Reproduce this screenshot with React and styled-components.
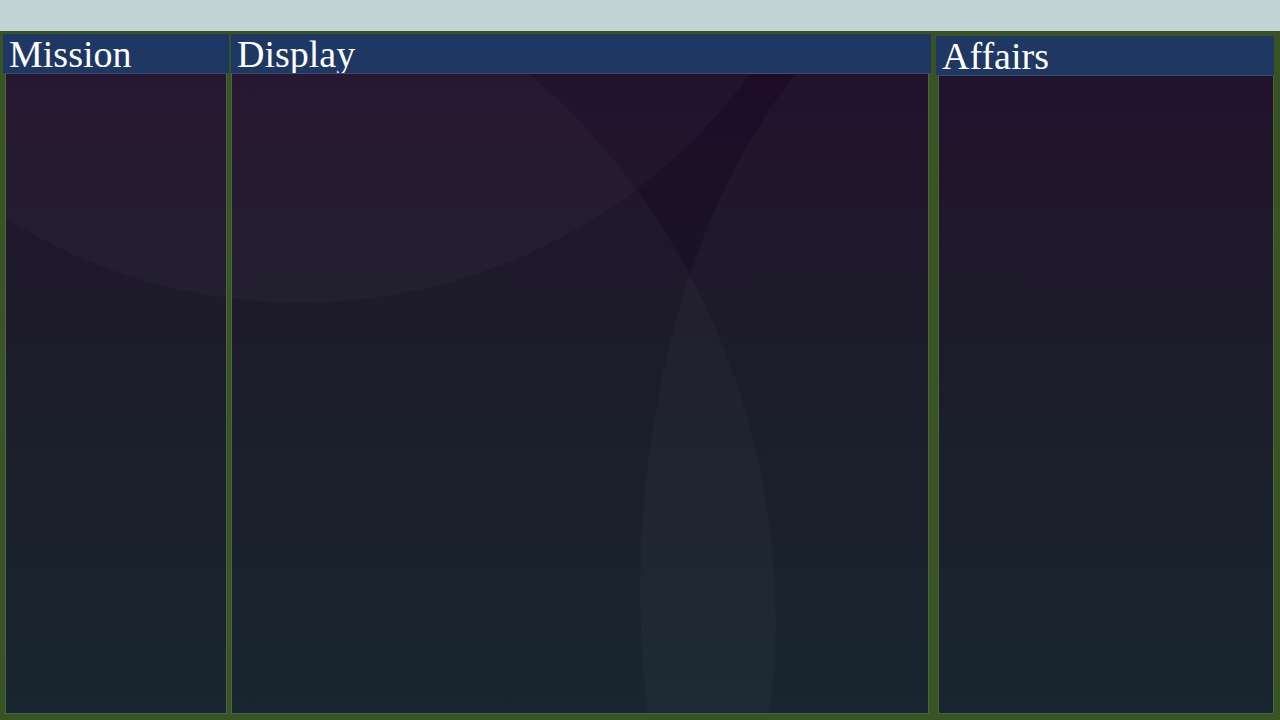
import React from 'react';
import styled, { createGlobalStyle } from 'styled-components';

const GlobalStyle = createGlobalStyle`
  html, body {
    margin: 0;
    padding: 0;
    height: 100%;
    background: #3a5323;
  }
  #root {
    height: 100%;
  }
`;

// soft shapes laid over the panel gradient, fixed to the viewport so they run across panels
const shapes = `
  radial-gradient(558px 558px at 300px -255px, rgba(255,255,255,0.022) 99.8%, transparent 100%),
  radial-gradient(658px 700px at 118px 620px, rgba(255,255,255,0.022) 99.8%, transparent 100%),
  radial-gradient(395px 650px at 1035px 590px, rgba(255,255,255,0.022) 99.8%, transparent 100%),
  linear-gradient(to bottom, #1e0b27 0px, #1e0c27 74px, #161925 400px, #13212a 720px)
`;

const Page = styled.div`
  display: flex;
  flex-direction: column;
  height: 720px;
  overflow: hidden;
`;

const TopBar = styled.div`
  height: 31px;
  flex-shrink: 0;
  background: #c2d3d3;
`;

const Board = styled.div`
  flex: 1;
  display: flex;
  padding: 3px 6px 6px 3px;
  min-height: 0;
`;

const Column = styled.section`
  display: flex;
  flex-direction: column;
  width: ${(p) => p.width}px;
  margin-left: ${(p) => p.gap || 0}px;
  padding-top: ${(p) => p.offset || 0}px;
`;

const Header = styled.h2`
  margin: 0;
  height: 39px;
  flex-shrink: 0;
  background: #1f3763;
  border-bottom: 1px solid #3a4c6e;
  color: #ffffff;
  font-family: "Liberation Serif", "Times New Roman", serif;
  font-weight: normal;
  font-size: 38px;
  line-height: 40px;
  padding-left: 6px;
  box-sizing: border-box;
  height: 40px;
  white-space: nowrap;
  overflow: hidden;
`;

const Body = styled.div`
  flex: 1;
  margin: 0 ${(p) => p.inset ?? 2}px 0 ${(p) => p.insetLeft ?? 2}px;
  border: 1px solid #4b6447;
  border-top: none;
  background: ${shapes};
  background-attachment: fixed;
`;

export default function App() {
  return (
    <Page>
      <GlobalStyle />
      <TopBar />
      <Board>
        <Column width={226}>
          <Header>Mission</Header>
          <Body />
        </Column>
        <Column width={700} gap={2}>
          <Header>Display</Header>
          <Body insetLeft={0} />
        </Column>
        <Column width={338} gap={5} offset={2}>
          <Header>Affairs</Header>
          <Body inset={0} />
        </Column>
      </Board>
    </Page>
  );
}
